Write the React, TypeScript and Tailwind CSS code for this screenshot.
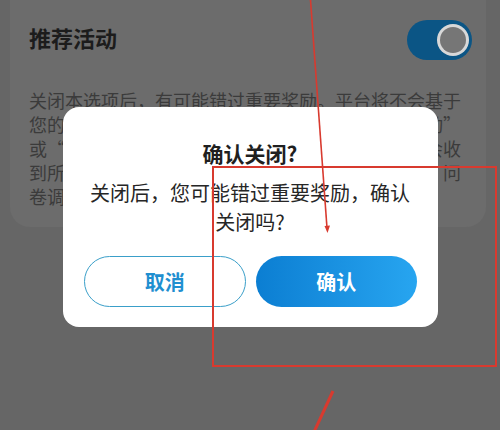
import React from "react";

const cardLines = [
    "关闭本选项后，有可能错过重要奖励。平台将不会基于",
    "您的个人偏好与使用情况向您推荐个性化“推荐活动”",
    "或“奖励活动”相关内容，您将不会再次看到也不会收",
    "到所有活动推送的提醒，包括但不限于抽奖、签到、问",
    "卷调查等活动。",
];

function Toggle() {
    return (
        <div className="flex h-[40px] w-[65px] items-center justify-end rounded-full bg-[#0b5585] pr-[3px]">
            <div className="flex h-[32px] w-[32px] items-center justify-center rounded-full bg-[#d8d8d8]">
                <div className="h-[26px] w-[26px] rounded-full bg-[#767676]" />
            </div>
        </div>
    );
}

function Annotations() {
    return (
        <svg
            className="pointer-events-none absolute inset-0"
            width="500"
            height="430"
            viewBox="0 0 500 430"
        >
            <line x1="310.5" y1="0" x2="327" y2="228" stroke="#d83a2f" strokeWidth="1.6" />
            <polygon points="327.5,233 324.5,226 330,225.6" fill="#d83a2f" />
            <rect x="213" y="167" width="283" height="199" fill="none" stroke="#d83a2f" strokeWidth="2" />
            <line x1="333" y1="391" x2="314" y2="432" stroke="#d83a2f" strokeWidth="3" />
        </svg>
    );
}

function ConfirmDialog() {
    return (
        <div className="absolute inset-0 flex justify-center pt-[107px]">
            <div className="flex h-[220px] w-[375px] flex-col items-center rounded-[16px] bg-white px-[21px] pt-[32px]">
                <h3 className="text-[21px] font-bold leading-[28px] text-[#1f1f1f]">确认关闭?</h3>
                <p className="mt-[11px] w-[335px] text-center text-[20px] leading-[29px] text-[#262626]">
                    关闭后，您可能错过重要奖励，确认关闭吗?
                </p>
                <div className="mt-[20px] flex w-full gap-[10px]">
                    <button
                        type="button"
                        className="h-[51px] flex-1 rounded-full border-[1.5px] border-[#3a9fc9] text-[20px] font-bold text-[#1f8fd0]"
                    >
                        取消
                    </button>
                    <button
                        type="button"
                        className="h-[51px] flex-1 rounded-full bg-gradient-to-r from-[#0b7ed2] to-[#27a5f0] text-[20px] font-bold text-white"
                    >
                        确认
                    </button>
                </div>
            </div>
        </div>
    );
}

export default function App() {
    return (
        <div
            className="relative h-[430px] w-[500px] overflow-hidden bg-[#666666]"
            style={{ fontFamily: '"Noto Sans CJK SC", "Noto Sans", sans-serif' }}
        >
            <div className="ml-[10px] w-[476px] rounded-b-[20px] bg-[#6c6c6c] pb-[19px] pl-[19px] pr-[14px] pt-[17px]">
                <div className="flex items-center justify-between">
                    <h2 className="pb-[6px] text-[22px] font-bold leading-[40px] text-[#1c1c1c]">推荐活动</h2>
                    <Toggle />
                </div>
                <div className="mt-[25px] text-[18px] leading-[24px] text-[#3b3b3b]">
                    {cardLines.map((line) => (
                        <div key={line} className="whitespace-nowrap">
                            {line}
                        </div>
                    ))}
                </div>
            </div>
            <ConfirmDialog />
            <Annotations />
        </div>
    );
}
